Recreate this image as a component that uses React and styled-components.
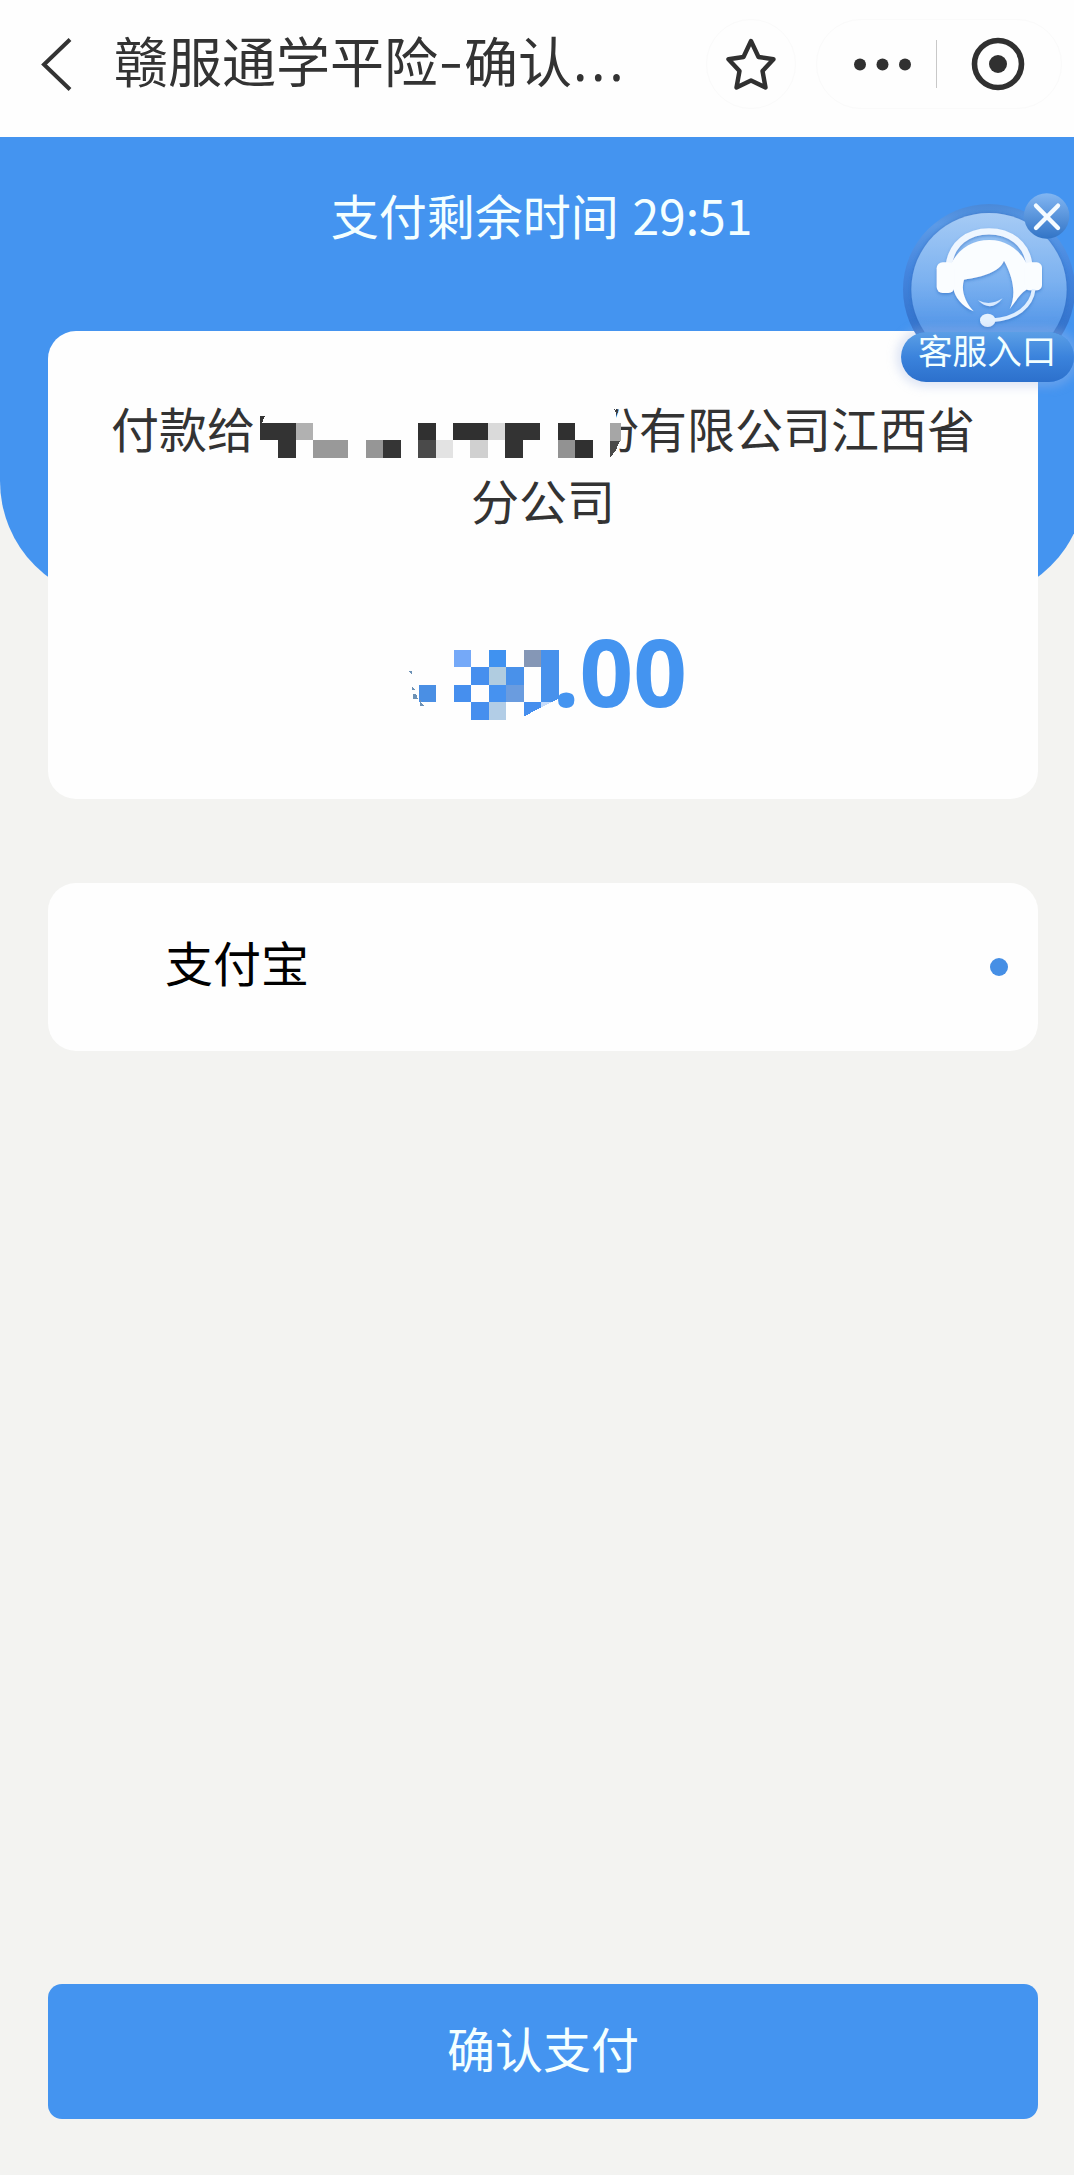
import React from "react";
import styled, { createGlobalStyle } from "styled-components";

const BLUE = "#4494f0";
const INK = "#333333";

const GlobalStyle = createGlobalStyle`
  * {
    box-sizing: border-box;
  }
  body {
    margin: 0;
    background: #f3f3f1;
    font-family: "Noto Sans CJK SC", "Noto Sans", sans-serif;
  }
`;

const Page = styled.div`
  position: relative;
  display: flex;
  flex-direction: column;
  width: 1074px;
  height: 2175px;
  overflow: hidden;
  background: #f3f3f1;
`;

const Header = styled.header`
  display: flex;
  align-items: center;
  flex: none;
  height: 137px;
  padding: 0 12px 10px 38px;
  background: #fefefe;
`;

const BackIcon = styled.svg`
  width: 38px;
  height: 56px;
  flex: none;
`;

const Title = styled.h1`
  display: flex;
  margin: -7px 0 0 38px;
  font-size: 54px;
  line-height: 72px;
  font-weight: 400;
  color: ${INK};
  white-space: nowrap;
`;

const Dash = styled.span`
  width: 26px;
  text-align: center;
  transform: translateY(-2px) scaleX(1.3);
`;

const Ellipsis = styled.span`
  font-family: "Noto Sans", sans-serif;
  letter-spacing: 3.6px;
  margin-left: 1px;
`;

const Capsule = styled.div`
  display: flex;
  align-items: center;
  justify-content: center;
  width: ${(props) => props.$width}px;
  height: 90px;
  border: 1px solid #fafafa;
  border-radius: 45px;
  margin-left: ${(props) => (props.$push ? "auto" : "20px")};
`;

const Hero = styled.section`
  flex: none;
  width: 1086px;
  height: 464px;
  border-radius: 0 0 120px 120px;
  background: ${BLUE};
`;

const Timer = styled.p`
  width: 1083px;
  margin: 0;
  padding-top: 41px;
  font-size: 48px;
  line-height: 72px;
  word-spacing: 3px;
  color: #f4ffff;
  text-align: center;
`;

const Content = styled.main`
  display: flex;
  flex-direction: column;
  flex: 1;
  width: 990px;
  margin: -270px 0 0 48px;
  padding-bottom: 56px;
`;

const Card = styled.section`
  height: ${(props) => props.$height}px;
  border-radius: 28px;
  background: #fefefe;
`;

const Payee = styled.p`
  margin: 0;
  padding-top: 60px;
  font-size: 48px;
  line-height: 72px;
  color: ${INK};
  text-align: center;
`;

const PayeeLine = styled.span`
  display: flex;
  justify-content: center;
  height: 72px;
`;

const NameMask = styled.svg`
  position: relative;
  flex: none;
  width: 336px;
  height: 72px;
  margin-top: 3px;
  overflow: visible;
`;

const Amount = styled.div`
  display: flex;
  height: 120px;
  margin: 76px 0 0 332px;
  font-family: "Noto Sans", sans-serif;
  font-size: 94px;
  line-height: 120px;
  font-weight: 700;
  color: ${BLUE};
`;

const AmountMask = styled.svg`
  width: 173px;
  height: 120px;
  overflow: visible;
`;

const Method = styled(Card)`
  display: flex;
  align-items: center;
  justify-content: space-between;
  margin-top: 84px;
  padding: 0 30px 0 117px;
  font-size: 48px;
  line-height: 72px;
  color: #000;
`;

const MethodName = styled.span`
  margin-top: -13px;
`;

const RadioDot = styled.span`
  width: 18px;
  height: 18px;
  border-radius: 50%;
  background: #468fe5;
`;

const PayButton = styled.button`
  height: 135px;
  margin-top: auto;
  padding: 0 0 9px;
  border: 0;
  border-radius: 14px;
  background: ${BLUE};
  color: #f4ffff;
  font: inherit;
  font-size: 48px;
`;

const Service = styled.aside`
  position: absolute;
  top: 170px;
  left: 874px;
  width: 200px;
  height: 230px;
  overflow: hidden;
`;

const ServiceArt = styled.svg`
  display: block;
  width: 200px;
  height: 230px;
`;

const ServiceLabel = styled.span`
  position: absolute;
  top: 162px;
  left: 27px;
  width: 173px;
  height: 50px;
  padding-left: 17px;
  border-radius: 25px;
  background: linear-gradient(#5b9fe6, #3b83dc 50%, #2c70cc);
  box-shadow: 0 0 10px 5px rgba(165, 185, 230, 0.35);
  font-size: 34.6px;
  line-height: 35px;
  font-weight: 400;
  color: #f2ffff;
  white-space: nowrap;
`;

// column, row, number of columns, fill
const nameCells = [
  [0, 0, 2, "#333"],
  [2, 0, 1, "#b1b1b1"],
  [9, 0, 1, "#303030"],
  [11, 0, 2, "#303030"],
  [13, 0, 1, "#dadada"],
  [14, 0, 2, "#333"],
  [17, 0, 1, "#303030"],
  [1, 1, 1, "#333"],
  [3, 1, 2, "#999"],
  [6, 1, 1, "#969696"],
  [7, 1, 1, "#353535"],
  [9, 1, 1, "#4a4a4a"],
  [10, 1, 1, "#e3e3e3"],
  [12, 1, 1, "#d0d0d0"],
  [14, 1, 1, "#333"],
  [17, 1, 1, "#929292"],
  [18, 1, 1, "#303030"],
];

const amountCells = [
  [2, 0, 1, "#75a9f8"],
  [4, 0, 1, "#4092f0"],
  [6, 0, 1, "#8597b6"],
  [7, 0, 1, "#4791ec"],
  [3, 1, 1, "#468fee"],
  [4, 1, 1, "#b0cce0"],
  [5, 1, 1, "#4991ea"],
  [7, 1, 1, "#4791ec"],
  [0, 2, 1, "#4a8fe4"],
  [2, 2, 1, "#468fee"],
  [4, 2, 1, "#4692f0"],
  [5, 2, 1, "#6a9cdf"],
  [3, 3, 1, "#468fee"],
  [4, 3, 1, "#b2cde6"],
];

const Cells = ({ cells, x, y }) =>
  cells.map(([col, row, span, fill]) => (
    <rect
      key={`${col}-${row}`}
      x={x + col * 17.45}
      y={y + row * 17.45}
      width={span * 17.45}
      height={17.45}
      fill={fill}
    />
  ));

const MaskedName = () => (
  <NameMask viewBox="0 0 336 72" shapeRendering="crispEdges">
    <path d="M334 8H361V24L366 29V46L362 64H334Z" fill="#fefefe" />
    <Cells cells={nameCells} x={6} y={29} />
    <path d="M4.7 22H10L7 29V46H4.7Z" fill="#333" />
    <rect x="355" y="29" width="11" height="17.5" fill="#a6a6a6" />
    <path d="M355 46.5H365L361 56L355 64Z" fill="#4a4a4a" />
    <path d="M359 15L363 18L362 20Z" fill="#444" />
  </NameMask>
);

const MaskedAmount = () => (
  <AmountMask viewBox="0 0 173 120" shapeRendering="crispEdges">
    <Cells cells={amountCells} x={39} y={39} />
    <path d="M161.2 73.9H178.6V87.5L161.2 96.5Z" fill="#4791ec" />
    <path d="M161.2 91.3H171L161.2 96.5Z" fill="#c6dcfa" />
    <path d="M143.7 91.3H161.2V96.5L143.7 105.5Z" fill="#468fee" />
    <g fill="#6c91b5">
      <path d="M29 60H32V64Z" />
      <path d="M32 75L35 79L32 79Z" />
      <path d="M33 83H36L38 88H33Z" />
      <path d="M40 87L42 93L44 94V95H40Z" />
    </g>
  </AmountMask>
);

const ServiceEntry = () => (
  <Service>
    <ServiceArt viewBox="0 0 600 690">
      <defs>
        <linearGradient id="ring" x1="0" y1="0" x2="0" y2="1">
          <stop offset="0" stopColor="#4a89d8" />
          <stop offset="0.12" stopColor="#5c9ae6" />
          <stop offset="0.4" stopColor="#4485de" />
          <stop offset="1" stopColor="#2664bd" />
        </linearGradient>
        <linearGradient id="disc" x1="0" y1="0" x2="0" y2="1">
          <stop offset="0" stopColor="#a6cbf5" />
          <stop offset="0.45" stopColor="#7bb1f0" />
          <stop offset="0.8" stopColor="#4d92e7" />
        </linearGradient>
        <linearGradient id="close" x1="0" y1="0" x2="0" y2="1">
          <stop offset="0" stopColor="#82b6f2" />
          <stop offset="1" stopColor="#3274c6" />
        </linearGradient>
        <filter id="soft" x="-20%" y="-20%" width="140%" height="140%">
          <feDropShadow dx="0" dy="5" stdDeviation="5" floodColor="#2f6fc4" floodOpacity="0.6" />
        </filter>
        <filter id="rim" x="-10%" y="-10%" width="120%" height="120%">
          <feDropShadow dx="0" dy="0" stdDeviation="6" floodColor="#2868bd" floodOpacity="0.7" />
        </filter>
      </defs>
      <ellipse cx="345" cy="358" rx="258" ry="256" fill="url(#ring)" />
      <ellipse cx="345" cy="358" rx="233" ry="229" fill="url(#disc)" filter="url(#rim)" />
      <g fill="#fafdff" filter="url(#soft)">
        <path
          d="M224 288C232 220 283 184 345 184C407 184 458 220 466 285"
          fill="none"
          stroke="#eef6ff"
          strokeWidth="19"
        />
        <path d="M228 290C250 236 294 210 346 210C400 210 443 243 462 290V356C442 366 426 392 407 417C425 380 422 330 390 272C376 306 330 319 270 329C260 362 273 395 299 424C262 407 243 382 237 353Z" />
        <rect x="188" y="277" width="53" height="92" rx="18" />
        <rect x="451" y="277" width="53" height="84" rx="16" />
        <path d="M312 391Q348 409 386 385Q351 429 312 391Z" fill="#d8eaff" />
        <path d="M479 358C473 409 427 447 352 451" fill="none" stroke="#e0efff" strokeWidth="11" />
        <ellipse cx="341" cy="451" rx="23" ry="20" fill="#e5f2ff" />
      </g>
      <circle cx="518" cy="138" r="68" fill="url(#close)" />
      <path
        d="M486 107L552 174M552 107L486 174"
        stroke="#f5fbff"
        strokeWidth="13"
        strokeLinecap="round"
      />
    </ServiceArt>
    <ServiceLabel>客服入口</ServiceLabel>
  </Service>
);

const App = () => {
  return (
    <>
      <GlobalStyle />
      <Page>
        <Header>
          <BackIcon viewBox="0 0 38 56" fill="none" stroke={INK} strokeWidth="4">
            <path d="M32 3.5L6 28.5L32 53.5" />
          </BackIcon>
          <Title>
            赣服通学平险<Dash>-</Dash>确认<Ellipsis>...</Ellipsis>
          </Title>
          <Capsule $width={90} $push>
            <svg width="54" height="54" viewBox="0 0 54 54" fill="none" stroke="#303030" strokeWidth="4.4" strokeLinejoin="round">
              <path d="M27 4L34.5 20L49.5 22.2L38.5 34L41.5 50.5L27 43.5L12.5 50.5L15.5 34L4.5 22.2L19.5 20Z" />
            </svg>
          </Capsule>
          <Capsule $width={246}>
            <svg width="244" height="54" viewBox="0 0 244 54">
              <g fill="#303030">
                <circle cx="43" cy="27.5" r="6" />
                <circle cx="65.5" cy="27.5" r="6" />
                <circle cx="88" cy="27.5" r="6" />
                <circle cx="181" cy="27" r="9" />
              </g>
              <path d="M119.5 3V51" stroke="#c8c8c8" />
              <circle cx="181" cy="27" r="23.5" fill="none" stroke="#303030" strokeWidth="5.6" />
            </svg>
          </Capsule>
        </Header>
        <Hero>
          <Timer>支付剩余时间 29:51</Timer>
        </Hero>
        <Content>
          <Card $height={468}>
            <Payee>
              <PayeeLine>
                <span>付款给</span>
                <MaskedName />
                <span>份有限公司江西省</span>
              </PayeeLine>
              <PayeeLine>分公司</PayeeLine>
            </Payee>
            <Amount>
              <MaskedAmount />
              <span>.00</span>
            </Amount>
          </Card>
          <Method $height={168}>
            <MethodName>支付宝</MethodName>
            <RadioDot />
          </Method>
          <PayButton>确认支付</PayButton>
        </Content>
        <ServiceEntry />
      </Page>
    </>
  );
};

export default App;
